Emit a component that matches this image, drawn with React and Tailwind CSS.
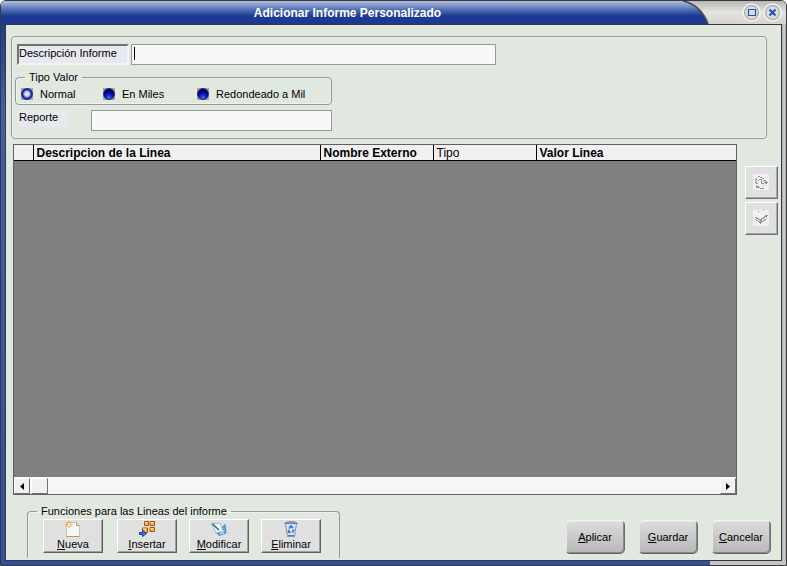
import React from "react";

const columns = [
  { label: "", width: "w-[19px]", bold: true },
  { label: "Descripcion de la Linea", width: "w-[287px]", bold: true },
  { label: "Nombre Externo", width: "w-[113px]", bold: true },
  { label: "Tipo", width: "w-[103px]", bold: false },
  { label: "Valor Linea", width: "w-auto", bold: true },
];

function TitleBar() {
  return (
    <header className="flex h-[23px] shrink-0 bg-linear-to-b from-[#b8b8b4] via-[#e4e4e0] to-[#d4d4cc]">
      <div className="flex min-w-0 flex-1 items-center justify-center bg-linear-to-b from-[#b4c0e0] via-[#4060a8] via-45% to-[#1c3a94] to-65% pl-3">
        <h1 className="text-[12px] leading-4 font-bold text-white">Adicionar Informe Personalizado</h1>
      </div>
      <svg width="27" height="23" viewBox="0 0 27 23" className="shrink-0" aria-hidden="true">
        <defs>
          <linearGradient id="tab" x1="0" y1="0" x2="0" y2="23" gradientUnits="userSpaceOnUse">
            <stop offset="0" stopColor="#b4c0e0" />
            <stop offset="0.45" stopColor="#4060a8" />
            <stop offset="0.65" stopColor="#1c3a94" />
          </linearGradient>
        </defs>
        <path d="M0 0H2C14 3 22 12 26 23H0Z" fill="url(#tab)" />
        <path d="M1 0C14 3 22 12 26 23" fill="none" stroke="#484848" strokeWidth="1.6" />
      </svg>
      <div className="flex w-[77px] shrink-0 items-center justify-end gap-[2px] pr-1">
        <WindowButton label="Maximizar">
          <path d="M6.5 6.5H13.5V12.5H6.5Z" strokeWidth="1.2" />
        </WindowButton>
        <WindowButton label="Cerrar">
          <path d="M6.5 6.5L12.5 12.5M12.5 6.5L6.5 12.5" strokeWidth="2" />
        </WindowButton>
      </div>
    </header>
  );
}

function WindowButton({ label, children }) {
  return (
    <button type="button" aria-label={label} className="size-[19px]">
      <svg width="19" height="19" viewBox="0 0 19 19" fill="none" stroke="#2050c0">
        <circle cx="9.5" cy="9.5" r="8.2" fill="#dcdcd8" stroke="#f4f4f4" strokeWidth="2" />
        <circle cx="9.5" cy="9.5" r="7" stroke="#b0b0ac" strokeWidth="1.4" />
        {children}
      </svg>
    </button>
  );
}

function Radio({ label, checked, className }) {
  return (
    <label className={"flex items-center gap-[7px] " + className}>
      <span className="flex bg-[#a4a8a4]">
        <input
          type="radio"
          name="tipo"
          defaultChecked={checked}
          className="size-3 appearance-none rounded-full border border-[#283060] bg-[radial-gradient(circle_at_50%_85%,#5070f0,#1020d0_30%,#0008a0_50%,#000048_80%)] checked:bg-[radial-gradient(circle_at_50%_50%,#e8e8ff_20%,#a0a8e8_40%,#1830c0_60%,#000068_85%)]"
        />
      </span>
      {label}
    </label>
  );
}

const fieldText = "border border-[#989898] bg-[#f8f8f8] outline-none";
const groupLine = "rounded-[4px] border border-[#989898] shadow-[inset_1px_1px_0_#f0f0f0,inset_-1px_-1px_0_#f0f0f0]";

function ReportForm() {
  return (
    <section className={"mr-[14px] ml-[5px] h-[103px] shrink-0 pt-[7px] pl-[3px] " + groupLine}>
      <div className="ml-0.5 flex gap-0.5">
        <label
          htmlFor="descripcion"
          className="h-[21px] w-28 border-2 border-t-[#707070] border-r-[#f4f4f4] border-b-[#f4f4f4] border-l-[#707070] bg-[#e8e8f0] leading-[14px]"
        >
          Descripción Informe
        </label>
        <div className="relative flex">
          <input id="descripcion" type="text" className={"h-[21px] w-[365px] px-1 " + fieldText} />
          <span className="absolute top-[3px] left-[3px] h-[13px] w-px bg-black" />
        </div>
      </div>
      <fieldset className={"mt-1 h-9 w-[317px] pl-[5px] " + groupLine}>
        <legend className="ml-1 px-1 leading-4">Tipo Valor</legend>
        <div className="flex h-[18px] items-center">
          <Radio label="Normal" checked className="w-[82px]" />
          <Radio label="En Miles" className="w-[94px]" />
          <Radio label="Redondeado a Mil" className="" />
        </div>
      </fieldset>
      <div className="mt-[5px] ml-1 flex">
        <label htmlFor="reporte" className="mr-[23px] h-[17px] w-[49px] bg-[#e8e8f0] leading-[14px]">
          Reporte
        </label>
        <input id="reporte" type="text" className={"h-[21px] w-[241px] px-1 " + fieldText} />
      </div>
    </section>
  );
}

function ArrowButton({ label, points, className }) {
  return (
    <button
      type="button"
      aria-label={label}
      className={"flex h-4 items-center justify-center border border-t-white border-r-[#707070] border-b-[#707070] border-l-white bg-[#f0f0f0] " + className}
    >
      <svg width="4" height="7" viewBox="0 0 4 7">
        <polygon points={points} />
      </svg>
    </button>
  );
}

function LineGrid() {
  return (
    <div className="flex min-w-0 flex-1 flex-col border border-[#606060] bg-[#808080]">
      <table className="w-full table-fixed border-collapse bg-[#f0f0f0]">
        <thead>
          <tr className="border-b border-black">
            {columns.map((c) => (
              <th
                key={c.label}
                scope="col"
                className={
                  "border-r border-black p-0 pt-px pl-[3px] text-left text-[12px] leading-[14px] last:border-r-0 " +
                  c.width +
                  (c.bold ? " font-bold" : " font-normal")
                }
              >
                {c.label}
              </th>
            ))}
          </tr>
        </thead>
      </table>
      <div className="mt-auto flex h-[17px] bg-[#f6f6f6] pt-px">
        <ArrowButton label="Izquierda" points="4,0 4,7 0,3.5" className="w-4" />
        <span className="ml-px h-4 w-[17px] border border-t-white border-r-[#707070] border-b-[#707070] border-l-white bg-[#f0f0f0]" />
        <ArrowButton label="Derecha" points="0,0 0,7 4,3.5" className="ml-auto w-4" />
      </div>
    </div>
  );
}

function MoveButton({ label, children }) {
  return (
    <button
      type="button"
      aria-label={label}
      className="flex size-[33px] items-center justify-center border border-t-white border-r-[#707070] border-b-[#707070] border-l-white bg-[#e0e0e0] shadow-[inset_-1px_-1px_0_#a8a8a8]"
    >
      <svg width="16" height="16" viewBox="0 0 16 16" fill="none" stroke="#989898" className="mr-px mb-px">
        <rect width="16" height="16" fill="#f0f0f0" stroke="none" />
        {children}
      </svg>
    </button>
  );
}

function LineButton({ letter, rest, icon, className }) {
  return (
    <button
      type="button"
      className={
        "flex h-[34px] w-[60px] flex-col items-center border border-t-white border-r-[#606060] border-b-[#606060] border-l-white bg-[#e0e0e0] shadow-[inset_-1px_-1px_0_#a0a0a0] leading-[14px] " +
        className
      }
    >
      <svg width="16" height="16" viewBox="0 0 16 16" className="mt-px shrink-0" aria-hidden="true">
        {icon}
      </svg>
      <span>
        <u>{letter}</u>
        {rest}
      </span>
    </button>
  );
}

const newIcon = (
  <>
    <path d="M1.5 1.5H11.5L14.5 4.5V15.5H1.5Z" fill="#f6f6f4" stroke="#c8c4bc" />
    <path d="M11.5 1.5V4.5H14.5M1.5 15.5H14.5" fill="none" stroke="#b89868" />
    <path d="M4 0V7M0.5 3.5H7.5M1.5 1L6.5 6M6.5 1L1.5 6" stroke="#e8a838" />
    <circle cx="4" cy="3.5" r="1.3" fill="#fff4b0" />
  </>
);
const insertIcon = (
  <>
    <g fill="#f8b838" stroke="#a85018">
      <path d="M5.5 0.5H9.5V4.5H5.5ZM11 0.5H15.5V4.5H11ZM3.5 7H8.5V11.5H3.5ZM11 6.5H15.5V10.5H11Z" />
    </g>
    <path d="M6 1.5H8M11.5 1.5H14M4 8H7M11.5 7.5H14" stroke="#ffe898" />
    <path d="M0.5 11.5H3.5V9L7.5 12.5L3.5 15.5V13.5H0.5Z" fill="#3878d8" stroke="#184090" />
  </>
);
const editIcon = (
  <>
    <path d="M6 12L14 3.5L15 12L8 14.5Z" fill="#58b0e0" stroke="#3888c0" />
    <path d="M1 3L9 2L12 10L5 12Z" fill="#f4faff" stroke="#90bcd8" />
    <path d="M10 11L13 10M9 13L13 12" stroke="#d0ecff" />
    <path d="M2 3.5L8 9" stroke="#286078" strokeWidth="1.5" />
    <path d="M1 2.5L3 4" stroke="#58a068" strokeWidth="2" />
  </>
);
const deleteIcon = (
  <>
    <path d="M2.5 2.5H13.5L11.5 15.5H4.5Z" fill="#d8e4f4" stroke="#8494ac" />
    <path d="M1.5 2.5C3 0 13 0 14.5 2.5Z" fill="#9cacc4" stroke="#70809c" />
    <path d="M5 14.5H11" stroke="#687890" />
    <path d="M6 7.5L8 5L10 7M10.8 8.5L9.5 11.5M7.8 11.5L5.5 11L5.8 8.8" fill="none" stroke="#2870e0" strokeWidth="1.7" />
  </>
);

function ActionButton({ letter, rest }) {
  return (
    <button
      type="button"
      className="h-[34px] w-[60px] rounded-[5px] border border-t-[#f4f4f4] border-r-[#707070] border-b-[#606060] border-l-[#e4e4e4] bg-linear-to-b from-[#dcdcdc] to-[#b8b8b8] shadow-[inset_-1px_-1px_0_#888888,inset_1px_1px_0_#e8e8e8] leading-4"
    >
      <u>{letter}</u>
      {rest}
    </button>
  );
}

export default function App() {
  return (
    <div className="flex h-screen w-full flex-col overflow-hidden rounded-t-[6px] border border-[#383838] bg-[#e0e8e0] font-['Liberation_Sans',Arial,sans-serif] text-[11px] text-black">
      <TitleBar />
      <div className="flex min-h-0 flex-1">
        <div className="w-1 shrink-0 bg-linear-to-b from-[#1c3a94] via-[#4060a8] via-15% to-[#3050a0]" />
        <main className="flex min-w-0 flex-1 flex-col border border-[#383838] pt-[11px]">
          <ReportForm />
          <div className="mt-[5px] ml-[7px] flex min-h-0 flex-1">
            <LineGrid />
            <div className="flex w-11 shrink-0 flex-col gap-[3px] pt-[22px] pl-2">
              <MoveButton label="Subir">
                <path d="M5 2.5H7M7 3.5H9M3 4.5H4M9 4.5H11M2 5.5H4M6 5.5H9M2 6.5H3M5 6.5H6M8 6.5H9M10 6.5H13M3 7.5H4M8 7.5H9M12 7.5H14M2 8.5H4M8 8.5H9M11 8.5H15M3 9.5H5M8 9.5H11M12 9.5H14M3 11.5H4M10 11.5H11M3 12.5H6M3 13.5H7M7 14.5H11" />
              </MoveButton>
              <MoveButton label="Bajar">
                <path d="M5 1.5H6M10 0.5H11M12 5.5H15M11 6.5H14M2 7.5H4M10 7.5H12M13 7.5H14M3 8.5H6M8 8.5H11M5 9.5H9M11 9.5H13M2 9.5H3M3 10.5H5M7 10.5H9M10 10.5H12M5 11.5H10M6 12.5H9M7 13.5H8" />
              </MoveButton>
            </div>
          </div>
          <footer className="flex h-[65px] shrink-0 items-start pr-[10px] pl-[21px]">
            <fieldset className="mt-2 h-[55px] w-[313px] rounded-t-[4px] border border-b-0 border-[#989898] pl-[15px] shadow-[inset_1px_1px_0_#f0f0f0]">
              <legend className="-ml-[6px] px-1 leading-4">Funciones para las Lineas del informe</legend>
              <div className="flex">
                <LineButton letter="N" rest="ueva" icon={newIcon} className="mr-[14px]" />
                <LineButton letter="I" rest="nsertar" icon={insertIcon} className="mr-3" />
                <LineButton letter="M" rest="odificar" icon={editIcon} className="mr-3" />
                <LineButton letter="E" rest="liminar" icon={deleteIcon} className="" />
              </div>
            </fieldset>
            <div className="mt-[25px] ml-auto flex gap-[13px]">
              <ActionButton letter="A" rest="plicar" />
              <ActionButton letter="G" rest="uardar" />
              <ActionButton letter="C" rest="ancelar" />
            </div>
          </footer>
        </main>
        <div className="w-1 shrink-0 bg-linear-to-r from-[#a8a8b0] via-[#d0d0dc] to-[#a8a8b0]" />
      </div>
      <div className="flex h-1 shrink-0">
        <div className="flex-1 bg-[#3050a0]" />
        <div className="w-[76px] bg-[#c4c4c4]" />
      </div>
    </div>
  );
}
